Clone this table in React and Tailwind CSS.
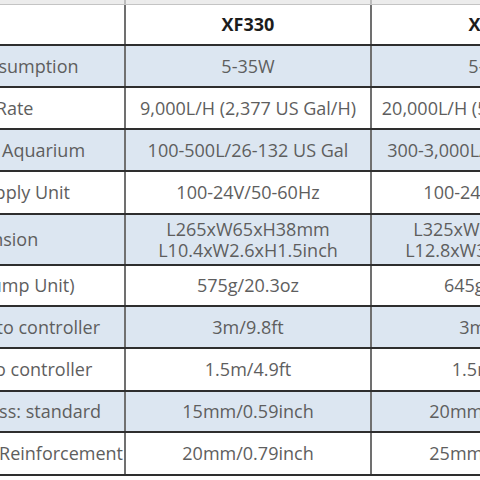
import React from "react";

const rows = [
  { label: "Power Consumption", a: ["5-35W"], b: ["5-50W"], h: "h-[42px]", blue: true },
  { label: "Flow Rate", a: ["9,000L/H (2,377 US Gal/H)"], b: ["20,000L/H (5,283 US Gal/H)"], h: "h-[42px]", blue: false },
  { label: "Suitable for Aquarium", a: ["100-500L/26-132 US Gal"], b: ["300-3,000L/79-793 US Gal"], h: "h-[42px]", blue: true },
  { label: "Power Supply Unit", a: ["100-24V/50-60Hz"], b: ["100-24V/50-60Hz"], h: "h-[43px]", blue: false },
  { label: "Dimension", a: ["L265xW65xH38mm", "L10.4xW2.6xH1.5inch"], b: ["L325xW77xH45mm", "L12.8xW3.0xH1.8inch"], h: "h-[51px]", blue: true },
  { label: "Weight (Pump Unit)", a: ["575g/20.3oz"], b: ["645g/22.8oz"], h: "h-[41px]", blue: false },
  { label: "Cable: Pump to controller", a: ["3m/9.8ft"], b: ["3m/9.8ft"], h: "h-[42px]", blue: true },
  { label: "Cable: PSU to controller", a: ["1.5m/4.9ft"], b: ["1.5m/4.9ft"], h: "h-[43px]", blue: false },
  { label: "Glass Thickness: standard", a: ["15mm/0.59inch"], b: ["20mm/0.79inch"], h: "h-[41px]", blue: true },
  { label: "Glass Thickness Reinforcement", a: ["20mm/0.79inch"], b: ["25mm/0.98inch"], h: "h-[43px]", blue: false },
];

function Cell({ lines, last, label }) {
  return (
    <div
      className={
        "w-[246px] shrink-0 flex flex-col items-center justify-center leading-[21px] whitespace-nowrap " +
        (last ? "" : "border-r-2 border-[#707070] ") +
        (label ? "pr-[18px]" : "")
      }
    >
      {lines.map((l, i) => (
        <span key={i}>{l}</span>
      ))}
    </div>
  );
}

export default function App() {
  return (
    <div
      className="w-[480px] h-[480px] overflow-hidden bg-white text-[18px] text-[#5e5e5e]"
      style={{ fontFamily: '"Open Sans", "Noto Sans", sans-serif' }}
    >
      <div className="flex h-[5px] bg-[#ececec] border-b border-[#c4c4c4] ml-[-120px]">
        <div className="w-[246px] shrink-0 border-r-2 border-[#bdbdbd]" />
        <div className="w-[246px] shrink-0 border-r-2 border-[#bdbdbd]" />
        <div className="w-[246px] shrink-0" />
      </div>
      <div className="ml-[-120px] w-[738px]">
        <div className="flex h-[41px] bg-white border-b-2 border-[#2e2e2e] font-bold text-[#1c1c1c]">
          <Cell lines={[""]} label />
          <Cell lines={["XF330"]} />
          <Cell lines={["XF350"]} last />
        </div>
        {rows.map((r, i) => (
          <div
            key={i}
            className={
              "flex border-b-2 border-[#2e2e2e] " + r.h + " " + (r.blue ? "bg-[#dce6f1]" : "bg-white")
            }
          >
            <Cell lines={[r.label]} label />
            <Cell lines={r.a} />
            <Cell lines={r.b} last />
          </div>
        ))}
      </div>
    </div>
  );
}
